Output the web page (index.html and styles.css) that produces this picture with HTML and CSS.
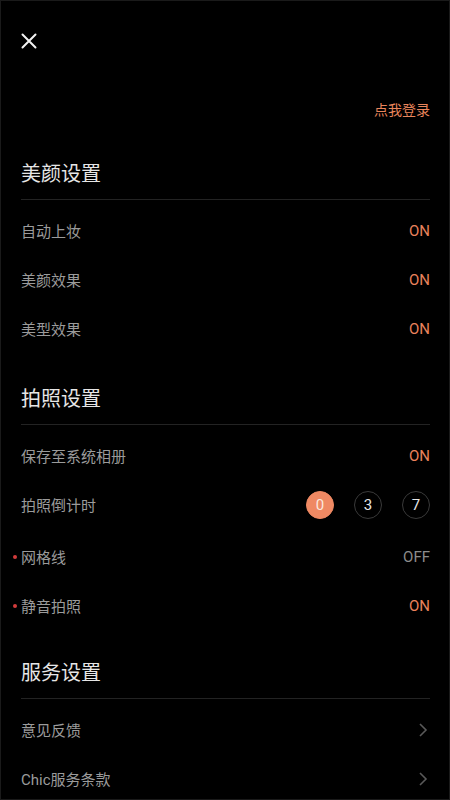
FILE: index.html
```html
<!DOCTYPE html>
<html lang="zh-CN">
<head>
<meta charset="utf-8">
<title>设置</title>
<link rel="stylesheet" href="styles.css">
</head>
<body>
<div class="screen">
  <div class="top">
    <svg class="close" width="16" height="16" viewBox="0 0 16 16">
      <path d="M1.5 1.5 L14.5 14.5 M14.5 1.5 L1.5 14.5" stroke="#f2f2f2" stroke-width="2" stroke-linecap="round" fill="none"/>
    </svg>
    <div class="login-row"><span class="login">点我登录</span></div>
  </div>

  <section class="section">
    <h2 class="heading">美颜设置</h2>
    <div class="rows">
      <div class="row"><span class="label">自动上妆</span><span class="on">ON</span></div>
      <div class="row"><span class="label">美颜效果</span><span class="on">ON</span></div>
      <div class="row"><span class="label">美型效果</span><span class="on">ON</span></div>
    </div>
  </section>

  <section class="section section-photo">
    <h2 class="heading">拍照设置</h2>
    <div class="rows">
      <div class="row"><span class="label">保存至系统相册</span><span class="on">ON</span></div>
      <div class="row row-timer"><span class="label">拍照倒计时</span>
        <div class="timers">
          <span class="timer active">0</span>
          <span class="timer">3</span>
          <span class="timer">7</span>
        </div>
      </div>
      <div class="row"><span class="dot"></span><span class="label">网格线</span><span class="off">OFF</span></div>
      <div class="row"><span class="dot"></span><span class="label">静音拍照</span><span class="on">ON</span></div>
    </div>
  </section>

  <section class="section">
    <h2 class="heading">服务设置</h2>
    <div class="rows">
      <div class="row"><span class="label">意见反馈</span>
        <svg class="chev" width="10" height="16" viewBox="0 0 10 16"><path d="M2 2 L8 8 L2 14" stroke="#595959" stroke-width="1.6" fill="none"/></svg>
      </div>
      <div class="row"><span class="label">Chic服务条款</span>
        <svg class="chev" width="10" height="16" viewBox="0 0 10 16"><path d="M2 2 L8 8 L2 14" stroke="#595959" stroke-width="1.6" fill="none"/></svg>
      </div>
    </div>
  </section>
</div>
</body>
</html>
```

FILE: styles.css
```css
* { box-sizing: border-box; }
html, body { margin: 0; padding: 0; background: #000; }
body {
  font-family: Roboto, "Noto Sans CJK SC", sans-serif;
}
.screen {
  width: 450px;
  height: 800px;
  overflow: hidden;
  background: #000;
  border: 1px solid #1a1a1a;
  padding: 0 19px 0 20px;
}
.top {
  padding-top: 32px;
  display: flex;
  flex-direction: column;
}
.close {
  display: block;
}
.login-row {
  margin-top: 51px;
  display: flex;
  justify-content: flex-end;
  height: 20px;
  line-height: 20px;
}
.login {
  color: #e9855c;
  font-size: 14px;
}
.section { padding-bottom: 18px; }
.section-photo { padding-bottom: 15px; }
.top + .section { margin-top: 26px; }
.heading {
  margin: 0;
  height: 54px;
  display: flex;
  align-items: center;
  font-size: 20px;
  font-weight: 400;
  color: #e6e6e6;
  border-bottom: 1px solid #232323;
}
.rows { padding-top: 6px; }
.row {
  position: relative;
  height: 49px;
  display: flex;
  align-items: center;
  justify-content: space-between;
  font-size: 15px;
}
.row-timer { height: 52px; padding-bottom: 3px; }
.label { color: #9b9b9b; flex: 1; }
.on { color: #e9825c; }
.off { color: #8c8c8c; }
.dot {
  position: absolute;
  left: -8px;
  top: 50%;
  width: 4px;
  height: 4px;
  margin-top: -2px;
  border-radius: 50%;
  background: #d23b3b;
}
.timers { display: flex; gap: 20px; }
.timer {
  width: 28px;
  height: 28px;
  border-radius: 50%;
  border: 1px solid #3a3a3a;
  color: #e6e6e6;
  font-size: 15px;
  display: flex;
  align-items: center;
  justify-content: center;
}
.timer.active {
  background: #ef8963;
  border-color: #ef8963;
  color: #fbe8df;
}
.chev { display: block; margin-right: 2px; }
```
